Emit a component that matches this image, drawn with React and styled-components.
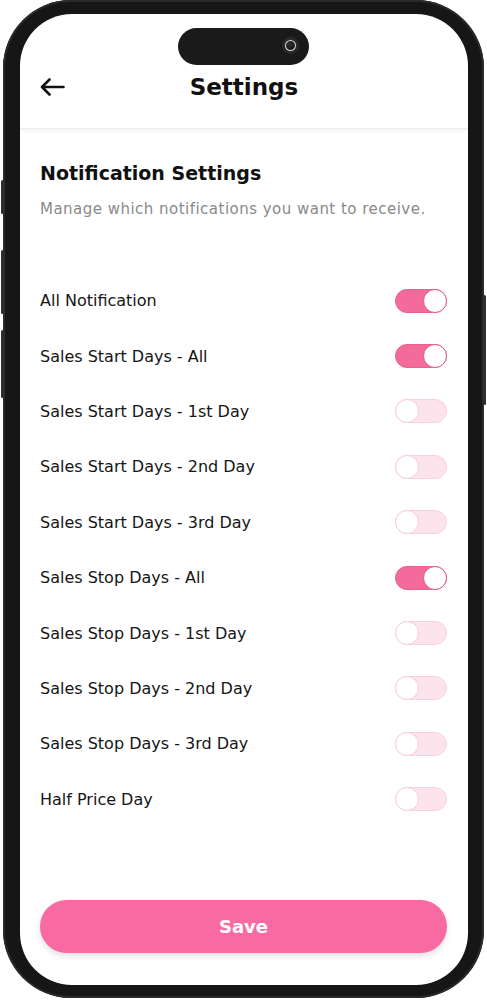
import React, { useState } from 'react'
import styled, { createGlobalStyle } from 'styled-components'

const GlobalStyle = createGlobalStyle`
    html, body {
        margin: 0;
        padding: 0;
        background: #fff;
    }
    body {
        font-family: "DejaVu Sans", "Noto Sans", sans-serif;
    }
`

const Phone = styled.div`
    position: relative;
    margin-left: 3px;
    width: 481px;
    height: 998px;
    box-sizing: border-box;
    padding: 14px 16px 13px 17px;
    background: #161616;
    border-radius: 68px;
    box-shadow: inset 0 0 0 2px #2a2a2a;
`

const SideButton = styled.span`
    position: absolute;
    top: ${p => p.top}px;
    height: ${p => p.h}px;
    ${p => (p.right ? 'right: -2px;' : 'left: -2px;')}
    width: 3px;
    border-radius: 2px;
    background: #2b2e33;
`

const Screen = styled.div`
    position: relative;
    height: 100%;
    background: #fff;
    border-radius: 52px;
    overflow: hidden;
    display: flex;
    flex-direction: column;
`

const Island = styled.div`
    position: absolute;
    top: 14px;
    left: 158px;
    width: 131px;
    height: 37px;
    border-radius: 19px;
    background: #1a1a1a;
`

const Camera = styled.span`
    position: absolute;
    right: 13px;
    top: 12px;
    width: 11px;
    height: 11px;
    border-radius: 50%;
    background: radial-gradient(circle at 40% 40%, #333 0, #111 70%);
    box-shadow: 0 0 0 1px #ddd inset, 0 0 0 3px #2a2a2a;
`

const Header = styled.header`
    display: grid;
    grid-template-columns: 1fr auto 1fr;
    align-items: center;
    height: 115px;
    box-sizing: border-box;
    padding: 31px 20px 0 20px;
    border-bottom: 1px solid #eeeeee;
    box-shadow: 0 2px 4px rgba(0, 0, 0, 0.04);
`

const BackButton = styled.button`
    justify-self: start;
    display: flex;
    align-items: center;
    padding: 0;
    border: 0;
    background: none;
    cursor: pointer;
`

const Title = styled.h1`
    margin: 0;
    font-size: 23px;
    font-weight: 600;
    color: #111;
`

const Content = styled.main`
    flex: 1;
    display: flex;
    flex-direction: column;
    padding: 0 21px 32px 20px;
`

const SectionTitle = styled.h2`
    margin: 32px 0 0;
    font-size: 19px;
    line-height: 24px;
    font-weight: 600;
    color: #111;
`

const SectionText = styled.p`
    margin: 14px 0 0;
    font-size: 15px;
    line-height: 20px;
    letter-spacing: 0.48px;
    color: #8a8a8a;
`

const List = styled.ul`
    list-style: none;
    margin: 54px 0 0;
    padding: 0;
`

const Row = styled.li`
    display: flex;
    align-items: center;
    justify-content: space-between;
    height: 55.4px;
`

const Label = styled.span`
    font-size: 16px;
    color: #151515;
`

const Track = styled.button`
    position: relative;
    width: 52px;
    height: 24px;
    padding: 0;
    border-radius: 12px;
    cursor: pointer;
    border: 1px solid ${p => (p.on ? '#e9608f' : '#fad0de')};
    background: ${p => (p.on ? '#f26b9b' : '#fde3ec')};
`

const Knob = styled.span`
    position: absolute;
    top: -1px;
    ${p => (p.on ? 'right: -1px;' : 'left: -1px;')}
    width: 24px;
    height: 24px;
    box-sizing: border-box;
    border-radius: 50%;
    background: #fff;
    border: 1px solid ${p => (p.on ? '#dc5a88' : '#f8cbda')};
`

const Footer = styled.div`
    margin-top: auto;
`

const SaveButton = styled.button`
    width: 100%;
    height: 53px;
    border: 0;
    border-radius: 27px;
    background: #f86ba2;
    color: #fff;
    font-family: inherit;
    font-size: 18px;
    font-weight: 600;
    box-shadow: 0 3px 6px rgba(0, 0, 0, 0.12);
    cursor: pointer;
`

const initial = [
    ['All Notification', true],
    ['Sales Start Days - All', true],
    ['Sales Start Days - 1st Day', false],
    ['Sales Start Days - 2nd Day', false],
    ['Sales Start Days - 3rd Day', false],
    ['Sales Stop Days - All', true],
    ['Sales Stop Days - 1st Day', false],
    ['Sales Stop Days - 2nd Day', false],
    ['Sales Stop Days - 3rd Day', false],
    ['Half Price Day', false],
]

const Toggle = ({ on, onClick }) => (
    <Track on={on ? 1 : 0} onClick={onClick} aria-pressed={on}>
        <Knob on={on ? 1 : 0} />
    </Track>
)

export default function App() {
    const [items, setItems] = useState(initial)

    const flip = i => {
        setItems(items.map((it, j) => (j === i ? [it[0], !it[1]] : it)))
    }

    return (
        <>
            <GlobalStyle />
            <Phone>
                <SideButton top={180} h={34} />
                <SideButton top={250} h={64} />
                <SideButton top={330} h={68} />
                <SideButton right top={295} h={110} />
                <Screen>
                    <Island>
                        <Camera />
                    </Island>
                    <Header>
                        <BackButton aria-label="Back">
                            <svg width="25" height="18" viewBox="0 0 25 18" fill="none">
                                <path d="M23.5 9H2M9.5 1.5L2 9l7.5 7.5" stroke="#111" strokeWidth="2.6" strokeLinecap="round" strokeLinejoin="round" />
                            </svg>
                        </BackButton>
                        <Title>Settings</Title>
                        <span />
                    </Header>
                    <Content>
                        <SectionTitle>Notification Settings</SectionTitle>
                        <SectionText>Manage which notifications you want to receive.</SectionText>
                        <List>
                            {items.map(([label, on], i) => (
                                <Row key={label}>
                                    <Label>{label}</Label>
                                    <Toggle on={on} onClick={() => flip(i)} />
                                </Row>
                            ))}
                        </List>
                        <Footer>
                            <SaveButton>Save</SaveButton>
                        </Footer>
                    </Content>
                </Screen>
            </Phone>
        </>
    )
}
